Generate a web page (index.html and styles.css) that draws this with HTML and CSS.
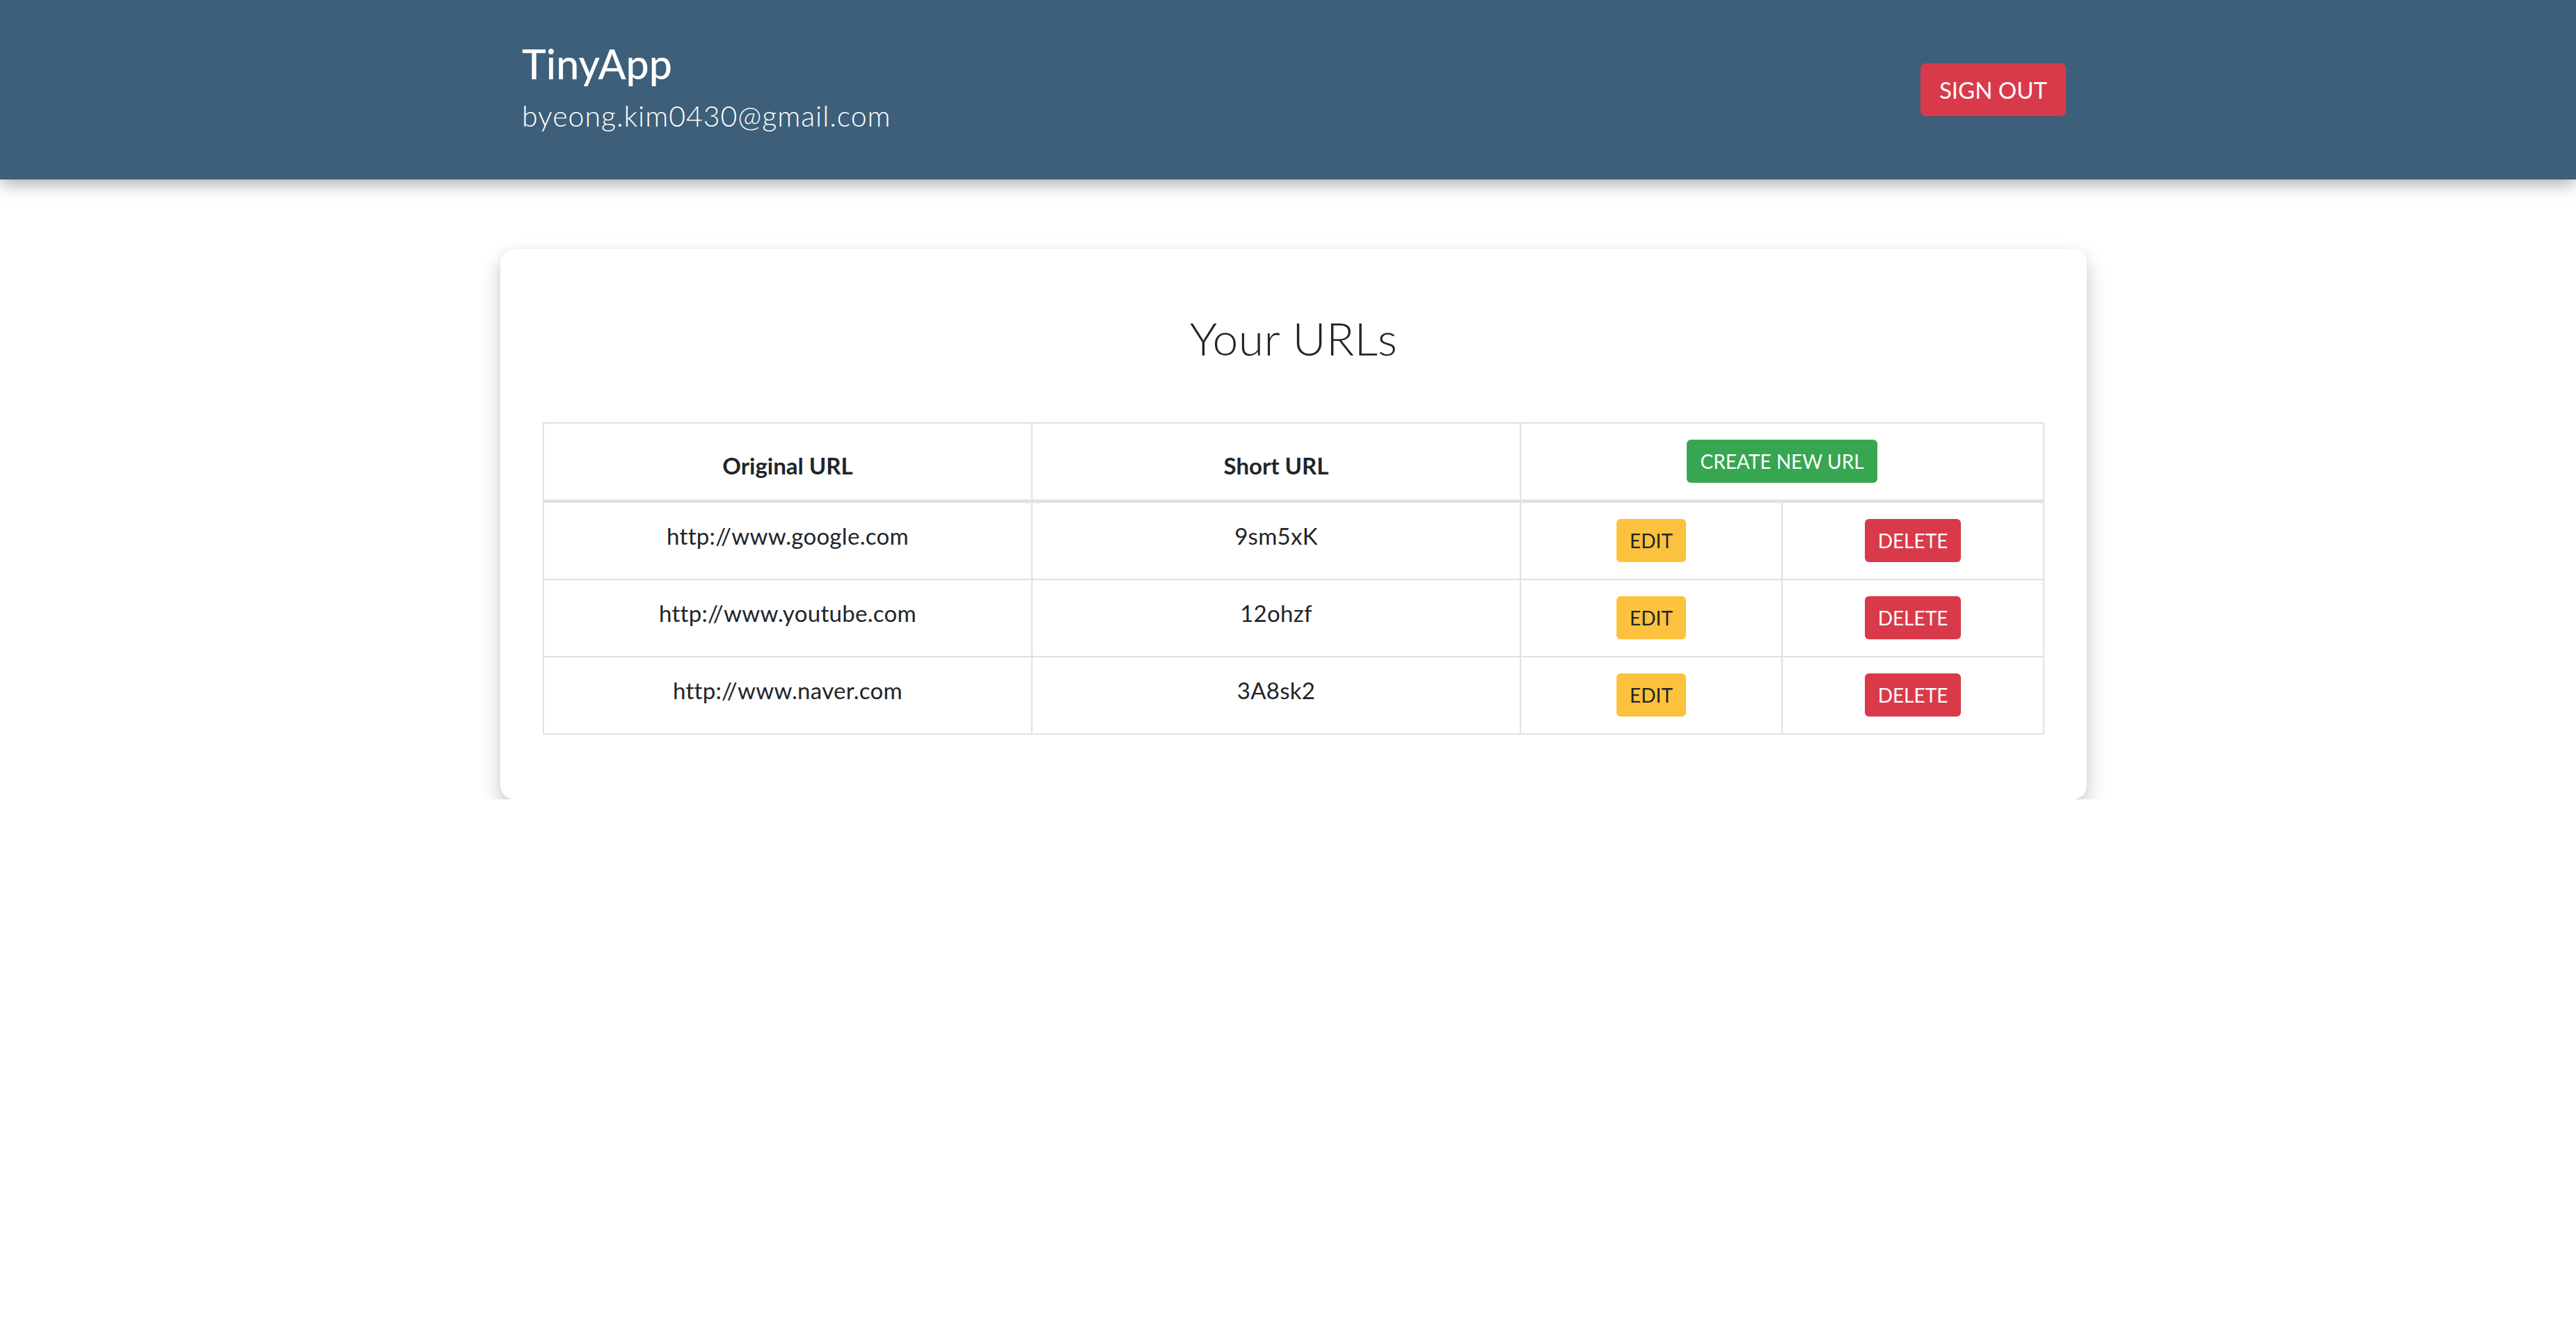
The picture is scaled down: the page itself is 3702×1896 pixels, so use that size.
FILE: index.html
```html
<!DOCTYPE html>
<html lang="en">
<head>
<meta charset="utf-8">
<title>TinyApp</title>
<link rel="stylesheet" href="styles.css">
</head>
<body>
<header class="topbar">
  <div class="container topbar-inner">
    <div class="brand-block">
      <div class="brand">TinyApp</div>
      <div class="user-email">byeong.kim0430@gmail.com</div>
    </div>
    <button class="btn btn-signout">SIGN OUT</button>
  </div>
</header>
<main class="container">
  <section class="card">
    <h3 class="card-title">Your URLs</h3>
    <table class="url-table">
      <thead>
        <tr>
          <th class="col-url">Original URL</th>
          <th class="col-url">Short URL</th>
          <th colspan="2"><button class="btn btn-sm btn-create">CREATE NEW URL</button></th>
        </tr>
      </thead>
      <tbody>
        <tr>
          <td>http://www.google.com</td>
          <td>9sm5xK</td>
          <td class="col-action"><button class="btn btn-sm btn-edit">EDIT</button></td>
          <td class="col-action"><button class="btn btn-sm btn-delete">DELETE</button></td>
        </tr>
        <tr>
          <td>http://www.youtube.com</td>
          <td>12ohzf</td>
          <td class="col-action"><button class="btn btn-sm btn-edit">EDIT</button></td>
          <td class="col-action"><button class="btn btn-sm btn-delete">DELETE</button></td>
        </tr>
        <tr>
          <td>http://www.naver.com</td>
          <td>3A8sk2</td>
          <td class="col-action"><button class="btn btn-sm btn-edit">EDIT</button></td>
          <td class="col-action"><button class="btn btn-sm btn-delete">DELETE</button></td>
        </tr>
      </tbody>
    </table>
  </section>
</main>
</body>
</html>
```
FILE: styles.css
```css
* { box-sizing: border-box; }

html, body {
  margin: 0;
  padding: 0;
  background: #ffffff;
}

body {
  font-family: Lato, "Open Sans", "Liberation Sans", sans-serif;
  font-size: 33px;
  line-height: 1.5;
  color: #212529;
}

.container {
  width: 2280px;
  margin-left: calc(50% - 1132px);
}

.topbar {
  background: #3d5f7a;
  height: 258px;
  box-shadow: 0 6px 24px rgba(0, 0, 0, 0.34);
  position: relative;
  z-index: 1;
}

.topbar-inner {
  display: flex;
  justify-content: space-between;
  align-items: center;
  height: 100%;
  padding: 0 30px 0 31px;
}

.brand-block {
  display: flex;
  flex-direction: column;
  color: #ffffff;
  padding-bottom: 8px;
}

.brand {
  font-size: 59px;
  line-height: 71px;
  font-weight: 500;
}

.user-email {
  font-size: 41px;
  line-height: 57px;
  font-weight: 300;
  letter-spacing: 1px;
  margin-top: 11px;
}

.btn {
  font-family: inherit;
  border: none;
  cursor: pointer;
  color: #ffffff;
  font-weight: 400;
  display: inline-block;
}

.btn-signout {
  background: #d93a4a;
  font-size: 33px;
  line-height: 50px;
  padding: 13px 27px;
  border-radius: 7px;
}

.btn-sm {
  font-size: 28px;
  line-height: 42px;
  padding: 10px 19px;
  border-radius: 6px;
}

.btn-create { background: #37a651; }
.btn-edit { background: #fcc23d; color: #212529; }
.btn-delete { background: #d93a4a; }

main.container {
  padding-top: 100px;
}

.card {
  background: #ffffff;
  border-radius: 20px;
  box-shadow: 0 14px 30px rgba(0, 0, 0, 0.22), 0 0 8px rgba(0, 0, 0, 0.04);
  padding: 88px 61px 93px;
}

.card-title {
  margin: 0 0 82px;
  text-align: center;
  font-size: 66px;
  line-height: 79px;
  font-weight: 300;
  letter-spacing: 0.5px;
}

.url-table {
  width: 100%;
  border-collapse: collapse;
  table-layout: fixed;
}

.url-table th,
.url-table td {
  border: 2px solid #dee2e6;
  text-align: center;
  padding: 23px 12px 24px;
}

.url-table th {
  vertical-align: bottom;
  font-weight: 700;
  border-bottom-width: 5px;
}

.url-table td {
  vertical-align: top;
  font-weight: 400;
  letter-spacing: 0.3px;
}

.col-url { width: 702px; }
```
